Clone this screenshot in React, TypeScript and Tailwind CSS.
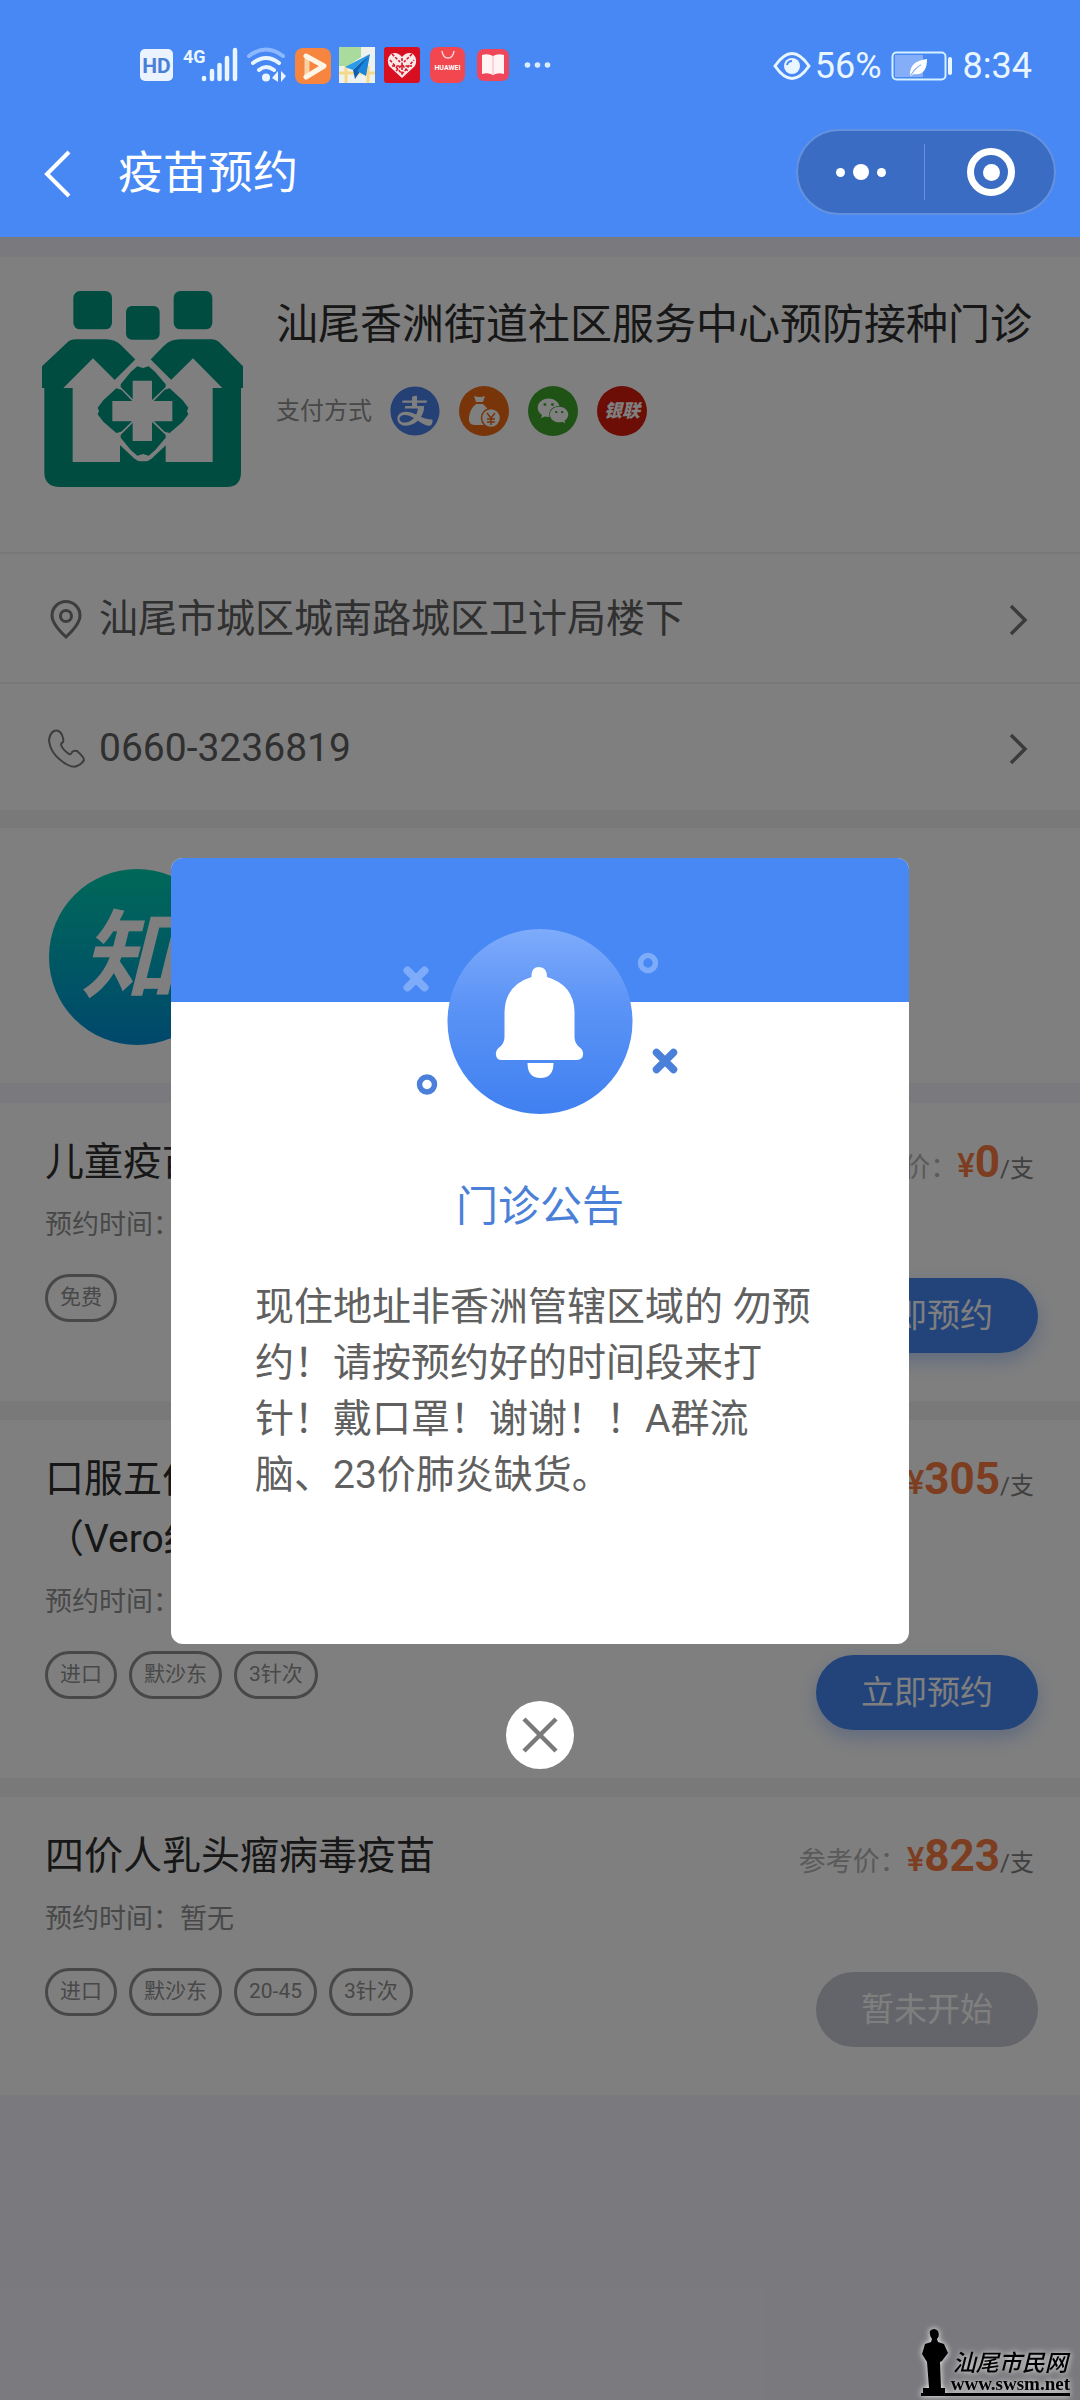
import { useState } from "react";
import { AiFillAlipayCircle } from "react-icons/ai";
import { FaWeixin } from "react-icons/fa";

type Vaccine = {
  name: string;
  time: string;
  tags: string[];
  price: string;
  open: boolean;
};

const vaccines: Vaccine[] = [
  { name: "儿童疫苗", time: "暂无", tags: ["免费"], price: "0", open: true },
  {
    name: "口服五价重配轮状病毒疫苗\n（Vero细胞）",
    time: "暂无",
    tags: ["进口", "默沙东", "3针次"],
    price: "305",
    open: true
  },
  {
    name: "四价人乳头瘤病毒疫苗",
    time: "暂无",
    tags: ["进口", "默沙东", "20-45", "3针次"],
    price: "823",
    open: false
  }
];

function SignalIcons() {
  return (
    <svg viewBox="0 0 414 40" className="h-10 w-[414px]" aria-hidden="true">
      <rect x="0" y="3" width="33" height="32" rx="5" fill="#eaf3ff" />
      <text x="16.5" y="27" textAnchor="middle" fontSize="21" fontWeight="700" fill="#4a7fd8">HD</text>
      <text x="43" y="17" fontSize="18" fontWeight="700" fill="#eaf6ff" fontFamily="Roboto">4G</text>
      <g stroke="#eaf6ff" strokeWidth="4.500" strokeLinecap="round">
        <path d="M64 33v-1M72 33v-8M79.500 33V19M87 33V12M95 33V4" />
      </g>
      <g fill="none" strokeLinecap="round" strokeWidth="4">
        <path d="M109 10q17-13 34 0" stroke="#8db8ff" />
        <path d="M113 17q13-10 26 0M119 24q7-6 15 0" stroke="#eaf6ff" />
      </g>
      <circle cx="126" cy="31.500" r="4" fill="#eaf6ff" />
      <path d="M132 32l6-7v11M141 25v11l5-6" fill="#eaf6ff" />
      <rect x="155" y="2" width="36" height="36" rx="8" fill="#f5853f" />
      <path d="M167 13v17" stroke="#fbd2a8" strokeWidth="5" strokeLinecap="round" />
      <path d="M166 10l18 10-18 11" fill="none" stroke="#fff5e6" strokeWidth="5" strokeLinecap="round" strokeLinejoin="round" />
      <g>
        <path d="M199 1h36v36h-36z" fill="#eef2ee" />
        <path d="M199 1h22v10l-13 9h-9z" fill="#a9dc9c" />
        <path d="M199 27h36M206 20v17M228 20v17" stroke="#f6d988" strokeWidth="3" />
        <path d="M230 8l-25 13 8 3z" fill="#2a9be8" />
        <path d="M230 8l-17 16 2 9 4-6z" fill="#0b5fae" />
        <path d="M230 8l-13 17 9 5z" fill="#1b84dc" />
      </g>
      <rect x="244" y="1" width="36" height="36" rx="3" fill="#d70f20" />
      <path d="M262 32l-13-12q-3-7 2-12 6-3 11 3 5-6 11-3 5 5 2 12z" fill="#fbe9e9" />
      <path d="M250 14l12 14 12-14M262 12v18M252 8l8 8M272 8l-8 8M252 20h20M256 25l6-6 6 6" stroke="#d70f20" strokeWidth="1.500" fill="none" strokeDasharray="3 1.500" />
      <rect x="290" y="1" width="35" height="36" rx="8" fill="#f2474f" />
      <path d="M302 5q1 7 6 7t6-7" fill="none" stroke="#ffd5d5" strokeWidth="1.500" />
      <text x="307.500" y="24" textAnchor="middle" fontSize="7" fontWeight="700" fill="#fff">HUAWEI</text>
      <rect x="337" y="3" width="32" height="32" rx="7" fill="#f0465a" />
      <path d="M342 9q6-2 11 1 5-3 11-1v19q-6-2-11 1-5-3-11-1z" fill="#fff3f3" />
      <path d="M353 10v18" stroke="#f7b5bc" strokeWidth="1" />
      <g fill="#dcecff">
        <circle cx="387.500" cy="19" r="2.800" />
        <circle cx="397.500" cy="19" r="2.800" />
        <circle cx="407.500" cy="19" r="2.800" />
      </g>
    </svg>
  );
}

function StatusBar() {
  return (
    <div className="flex h-[129px] items-start justify-between pr-12 pl-[140px] pt-[46px] text-[#eaf6ff]">
      <SignalIcons />
      <div className="flex h-10 items-center text-[36px] leading-10">
        <svg viewBox="0 0 38 30" className="mr-1 h-[30px] w-[38px]" aria-hidden="true">
          <path d="M2 15Q19-10 36 15 19 40 2 15z" fill="none" stroke="#eaf6ff" strokeWidth="3" />
          <circle cx="19" cy="15" r="8" fill="#eaf6ff" />
          <path d="M14 14q1-4 5-4" stroke="#4788f4" strokeWidth="2" fill="none" />
        </svg>
        <span>56%</span>
        <svg viewBox="0 0 62 30" className="mr-[10px] ml-[9px] h-[30px] w-[62px]" aria-hidden="true">
          <rect x="1.500" y="1.500" width="53" height="27" rx="4" fill="none" stroke="#d4f0ff" strokeWidth="2" />
          <rect x="4" y="4" width="28" height="22" fill="#84aff8" />
          <path d="M19 23q0-13 17-15 0 17-13 15l-3 2z" fill="#fff" />
          <path d="M20 24q5-8 10-10" stroke="#84aff8" strokeWidth="1.200" fill="none" />
          <rect x="57" y="6" width="4" height="18" rx="2" fill="#eaf6ff" />
        </svg>
        <span>8:34</span>
      </div>
    </div>
  );
}

function NavBar() {
  return (
    <div className="flex h-[108px] items-start justify-between pr-6 pl-[42px]">
      <div className="flex h-[90px] items-center">
        <button aria-label="返回" className="mr-[46px] block">
          <svg viewBox="0 0 30 48" className="h-12 w-[30px]" fill="none" stroke="#fff" strokeWidth="4">
            <path d="M27 2L5 24l22 22" />
          </svg>
        </button>
        <h1 className="text-[45px] leading-[60px] text-white">疫苗预约</h1>
      </div>
      <div className="flex h-[86px] w-[260px] items-center rounded-full border-2 border-[#6492de] bg-[#3a6cc3]">
        <button aria-label="更多" className="flex flex-1 items-center justify-center gap-2">
          <span className="size-[9px] rounded-full bg-white" />
          <span className="size-4 rounded-full bg-white" />
          <span className="size-[9px] rounded-full bg-white" />
        </button>
        <span className="h-14 w-px bg-[#6492de]" />
        <button aria-label="关闭小程序" className="flex flex-1 items-center justify-center pl-1">
          <span className="flex size-12 items-center justify-center rounded-full border-[7px] border-white">
            <span className="size-[17px] rounded-full bg-white" />
          </span>
        </button>
      </div>
    </div>
  );
}

function ClinicLogo() {
  return (
    <svg viewBox="126 512 603 588" className="h-[196px] w-[201px] shrink-0" aria-hidden="true">
      <g fill="#009880">
        <rect x="220" y="512" width="116" height="115" rx="20" />
        <rect x="378" y="557" width="101" height="101" rx="18" />
        <rect x="521" y="512" width="116" height="115" rx="20" />
        <path d="M126 738L201 667Q212 657 228 657H318Q345 657 365 676L429 741 492 676Q512 657 540 657H636Q648 657 658 666L729 738V803H723V1055Q723 1100 680 1100H180Q133 1100 133 1055V803H126Z" />
      </g>
      <g fill="#fff">
        <path d="M190 803L279 714 360 795V1025H218V803ZM667 803L579 714 497 795V1025H638V803Z" />
        <path d="M429 694L607 872 456 1014Q446 1023 436 1023H422Q412 1023 402 1014L251 872Z" />
      </g>
      <g fill="#009880">
        <path d="M362 792L393 754 412 738 429 743 446 738 465 754 497 792V800L457 838H400L362 800Z" />
        <path d="M362 952L393 990 412 1006 429 1001 446 1006 465 990 497 952V944L457 906H400L362 944Z" />
        <path d="M349 804L310 840 293 862 297 872 293 882 310 904 349 938 364 934 396 903V841L364 808Z" />
        <path d="M509 804L548 840 565 862 561 872 565 882 548 904 509 938 494 934 462 903V841L494 808Z" />
      </g>
      <path d="M398 781H456V842H517V903H456V962H398V903H337V842H398Z" fill="#fff" />
    </svg>
  );
}

function PayMethods() {
  return (
    <div className="flex items-center text-[24px] leading-9 text-[#909090]">
      <span>支付方式</span>
      <div className="ml-[18px] flex gap-[19px]">
        <span className="flex size-[50px] items-center justify-center rounded-full bg-white">
          <AiFillAlipayCircle className="size-[56px] shrink-0 text-[#4a80e8]" />
        </span>
        <span className="flex size-[50px] items-center justify-center rounded-full bg-[#ee6a12]">
          <svg viewBox="0 0 50 50" className="size-[50px]" aria-hidden="true">
            <path d="M15 10q6 2 11 0l-2 6h-7zM17 18h7q9 8 9 16-2 5-7 5H15q-6-1-5-8 1-8 7-13z" fill="#fff" />
            <circle cx="32" cy="32" r="9.500" fill="#fff" stroke="#ee6a12" strokeWidth="1.500" />
            <path d="M28 27l4 5 4-5M32 32v7M28 33h8M28 36h8" stroke="#ee6a12" strokeWidth="1.500" fill="none" />
          </svg>
        </span>
        <span className="flex size-[50px] items-center justify-center rounded-full bg-[#3ea62c]">
          <FaWeixin className="size-8 text-white" />
        </span>
        <span className="flex size-[50px] items-center justify-center rounded-full bg-[#d81a0c] text-[18px] leading-6 font-black whitespace-nowrap text-white italic">
          银联
        </span>
      </div>
    </div>
  );
}

function Chevron() {
  return (
    <svg viewBox="0 0 20 32" className="h-8 w-5" fill="none" stroke="#777" strokeWidth="3.500" aria-hidden="true">
      <path d="M3 2l14 14L3 30" />
    </svg>
  );
}

function ClinicCard() {
  return (
    <section className="bg-white text-[39px] text-[#606060]">
      <div className="flex gap-[33px] pt-[34px] pr-10 pb-[65px] pl-[42px]">
        <ClinicLogo />
        <div className="pt-1">
          <h2 className="mb-[31px] text-[42px] leading-[60px] text-[#2e2e2e]">汕尾香洲街道社区服务中心预防接种门诊</h2>
          <PayMethods />
        </div>
      </div>
      <a href="#map" className="flex h-[130px] items-center border-t-2 border-[#f0f0f0] pt-[3px] pr-[52px] pl-12">
        <svg viewBox="0 0 38 40" className="mr-[13px] h-10 w-[38px]" fill="none" stroke="#7a7a7a" strokeWidth="3" aria-hidden="true">
          <path d="M18 37Q4 24 4 15.500a14 14 0 0 1 28 0Q32 24 18 37z" />
          <circle cx="18" cy="16" r="5.500" />
        </svg>
        <span className="flex-1">汕尾市城区城南路城区卫计局楼下</span>
        <Chevron />
      </a>
      <a href="tel:0660-3236819" className="flex h-[128px] items-center border-t-2 border-[#f0f0f0] pt-[3px] pr-[52px] pl-12">
        <svg viewBox="0 0 38 40" className="mr-[13px] h-10 w-[38px]" fill="none" stroke="#7a7a7a" strokeWidth="2" aria-hidden="true">
          <path d="M6 2Q2 4 1 11q1 14 17 24 7 4 11 2 5-2 7-6 0-3-7-9-3-1-5 1-1 3-3 2-6-4-8-9 0-2 2-3 1-2-1-7Q11 0 6 2z" />
        </svg>
        <span className="flex-1">0660-3236819</span>
        <Chevron />
      </a>
    </section>
  );
}

function VaccineCard({ vaccine }: { vaccine: Vaccine }) {
  return (
    <article className="flex justify-between bg-white pt-[29px] pl-[45px]">
      <div className="pb-[79px]">
        <h3 className="text-[39px] leading-[60px] whitespace-pre-line text-[#2e2e2e]">{vaccine.name}</h3>
        <p className="mt-[15px] text-[27px] leading-9 text-[#909090]">预约时间：{vaccine.time}</p>
        <ul className="mt-[31px] flex gap-3">
          {vaccine.tags.map((tag) => (
            <li key={tag} className="h-12 rounded-full border-[3px] border-[#909090] px-3 text-[21px] leading-[40px] text-[#909090]">
              {tag}
            </li>
          ))}
        </ul>
      </div>
      <div className="flex flex-col items-end justify-between pr-[42px] pb-12">
        <p className="pr-1 text-[27px] leading-[60px] whitespace-nowrap text-[#b4b4b4]">
          参考价：
          <span className="text-[33px] font-medium text-[#f97a40]">¥</span>
          <span className="text-[44px] font-bold text-[#f97a40]">{vaccine.price}</span>
          <span className="text-[24px] text-[#808080]">/支</span>
        </p>
        {vaccine.open ? (
          <button className="h-[75px] w-[222px] rounded-full bg-[#4788f4] text-[33px] text-white shadow-[0_8px_20px_rgba(71,136,244,0.35)]">
            立即预约
          </button>
        ) : (
          <button disabled className="h-[75px] w-[222px] rounded-full bg-[#c9cad4] text-[33px] text-white">
            暂未开始
          </button>
        )}
      </div>
    </article>
  );
}

function NoticeDialog({ onClose }: { onClose: () => void }) {
  return (
    <div className="absolute inset-0 flex flex-col items-center justify-center bg-black/50 px-[171px] pb-[10px]">
      <div role="dialog" aria-labelledby="notice-title" className="w-full overflow-hidden rounded-[12px] bg-white">
        <div className="flex h-36 justify-center bg-[#4788f4] pt-[61px]">
          <svg viewBox="390 919 300 205" className="h-[205px] w-[300px] shrink-0" aria-hidden="true">
            <defs>
              <linearGradient id="bell" x1="0" y1="0" x2="0" y2="1">
                <stop offset="0" stopColor="#7eabfb" />
                <stop offset="0.4" stopColor="#5c94f6" />
                <stop offset="1" stopColor="#3f80f0" />
              </linearGradient>
            </defs>
            <circle cx="540" cy="1021.500" r="92.500" fill="url(#bell)" />
            <path d="M531.500 977Q531 967 539 967t8 10Q574 985 574.500 1012v25q0 7 6 11 4 3 2 9-2 3-6 3h-75q-4 0-5-3-2-6 2-9 6-4 6-11v-25Q505 985 531.500 977z" fill="#fff" />
            <path d="M527.500 1063h26q0 15-13 15t-13-15z" fill="#fff" />
            <g fill="none" strokeLinecap="round">
              <path d="M407.500 970.500l17 17m0-17l-17 17" stroke="#7eabfa" strokeWidth="8" />
              <circle cx="648" cy="963" r="7.500" stroke="#7eabfa" strokeWidth="5.500" />
              <path d="M656.500 1052.500l17 17m0-17l-17 17" stroke="#4a80da" strokeWidth="7.500" />
              <circle cx="427" cy="1084.500" r="7.500" stroke="#4a80da" strokeWidth="5.500" />
            </g>
          </svg>
        </div>
        <div className="px-[84px] pt-[175px] pb-[141px]">
          <h2 id="notice-title" className="text-center text-[42px] leading-[60px] text-[#4a80d8]">门诊公告</h2>
          <p className="mt-[42px] text-[39px] leading-[56px] text-[#606060]">
            现住地址非香洲管辖区域的 勿预约！请按预约好的时间段来打针！戴口罩！谢谢！！A群流脑、23价肺炎缺货。
          </p>
        </div>
      </div>
      <button aria-label="关闭" onClick={onClose} className="mt-[57px] flex size-[68px] items-center justify-center rounded-full bg-white">
        <svg viewBox="0 0 36 36" className="size-9" fill="none" stroke="#7a7a7a" strokeWidth="4.500">
          <path d="M2 2l32 32M34 2L2 34" />
        </svg>
      </button>
    </div>
  );
}

function SiteMark() {
  return (
    <div className="absolute right-[10px] bottom-1 flex items-end gap-[2px] border-b-[3px] border-black text-black drop-shadow-[0_0_3px_#fff]">
      <svg viewBox="0 0 28 66" className="h-[66px] w-7" aria-hidden="true">
        <path d="M9 4q4-4 8 0 2 5-1 8l1 3 6 2 4 9-6 8-2 1 1 26h4v5H2v-5h6L6 35l-5-8 3-10 6-2 1-3q-3-4-2-8z" />
      </svg>
      <div className="flex flex-col items-center">
        <span className="text-[23px] leading-[22px] font-medium italic">汕尾市民网</span>
        <span className="font-['Liberation_Serif',serif] text-[19px] leading-[18px] font-bold">www.swsm.net</span>
      </div>
    </div>
  );
}

export default function App() {
  const [noticeOpen, setNoticeOpen] = useState(true);

  return (
    <div className="relative flex min-h-screen flex-col bg-[#f5f4fd] font-[Roboto,'Noto_Sans_CJK_SC',sans-serif]">
      <header className="bg-[#4788f4]">
        <StatusBar />
        <NavBar />
      </header>

      <main className="relative flex-1 pt-5">
        <ClinicCard />
        <section className="mb-5 border-t-[18px] border-[#f2f2f2] bg-white px-[49px] pt-[41px] pb-[38px]">
          <div className="flex size-[176px] items-center rounded-full bg-linear-to-b from-[#00d0b0] to-[#0090d8] pl-8 text-[96px] leading-none font-bold text-white italic">
            知
          </div>
        </section>
        <div className="flex flex-col gap-[19px] bg-[#f2f2f2]">
          {vaccines.map((vaccine) => (
            <VaccineCard key={vaccine.name} vaccine={vaccine} />
          ))}
        </div>
        {noticeOpen ? <NoticeDialog onClose={() => setNoticeOpen(false)} /> : null}
      </main>

      <SiteMark />
    </div>
  );
}
